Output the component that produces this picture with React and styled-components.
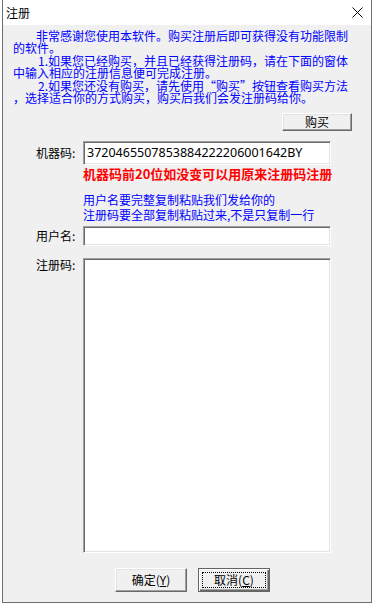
import React from 'react';
import styled, { createGlobalStyle } from 'styled-components';

const Global = createGlobalStyle`
  html, body { margin: 0; padding: 0; background: #ffffff; }
  body {
    width: 375px;
    height: 606px;
    overflow: hidden;
    font-family: "Noto Sans CJK SC", "Noto Sans", sans-serif;
  }
`;

const Window = styled.div`
  width: 370px;
  height: 603px;
  margin-left: 2px;
  box-sizing: border-box;
  border: 1px solid #6f6f6f;
  border-top: none;
  display: flex;
  flex-direction: column;
  background: #f0f0f0;
`;

const TitleBar = styled.div`
  height: 25px;
  flex: none;
  background: #ffffff;
  display: flex;
  align-items: center;
  justify-content: space-between;
  padding: 0 8px 0 3px;
`;

const Title = styled.span`
  font-size: 12px;
  line-height: 14px;
  color: #000;
  padding-top: 1px;
`;

const Client = styled.div`
  flex: 1;
  display: flex;
  flex-direction: column;
  padding: 5px 0 0 10px;
`;

const Intro = styled.div`
  color: #0000ff;
  font-size: 12px;
  line-height: 12px;
  display: flex;
  flex-direction: column;
  gap: 1px;
`;

const Para = styled.div`
  display: flex;
  flex-direction: column;
`;

const Line = styled.div`
  white-space: pre;
  height: 12px;
  padding-left: ${p => p.$indent || 0}px;
`;

const BuyRow = styled.div`
  display: flex;
  justify-content: flex-end;
  padding-right: 19px;
  margin-top: 9px;
`;

const Button = styled.div`
  width: ${p => p.$w || 72}px;
  height: ${p => p.$h || 24}px;
  box-sizing: border-box;
  background: #f0f0f0;
  border: 1px solid;
  border-color: ${p => (p.$default ? '#646464' : '#ffffff #696969 #696969 #ffffff')};
  box-shadow: ${p =>
    p.$default
      ? 'inset 1px 1px 0 #ffffff, inset -1px -1px 0 #696969, inset -2px -2px 0 #a0a0a0'
      : 'inset -1px -1px 0 #a0a0a0, inset 1px 1px 0 #e3e3e3'};
  display: flex;
  align-items: center;
  justify-content: center;
  font-size: 12px;
  line-height: 14px;
  color: #000;
  padding: ${p => (p.$default ? '3px' : '0')};
`;

const FocusRing = styled.span`
  flex: 1;
  align-self: stretch;
  border: 1px dotted #000;
  display: flex;
  align-items: center;
  justify-content: center;
`;

const Form = styled.div`
  display: grid;
  grid-template-columns: 47px 248px;
  margin-left: 23px;
  margin-top: 10px;
  align-items: center;
`;

const Label = styled.div`
  font-size: 12px;
  line-height: 14px;
  color: #000;
  align-self: ${p => (p.$top ? 'start' : 'center')};
  margin-top: ${p => p.$mt || 0}px;
`;

const Field = styled.div`
  box-sizing: border-box;
  height: ${p => p.$h}px;
  margin-top: ${p => p.$mt || 0}px;
  background: #ffffff;
  border: 1px solid;
  border-color: #a0a0a0 #ffffff #ffffff #a0a0a0;
  box-shadow: inset 1px 1px 0 #696969, inset -1px -1px 0 #e3e3e3;
  font-family: "Noto Sans", sans-serif;
  font-size: 12.5px;
  color: #000;
  padding: 3px 0 0 3px;
  line-height: 16px;
`;

const Warning = styled.div`
  grid-column: 2;
  margin-top: 2px;
  color: #ff0000;
  font-weight: bold;
  font-size: 13px;
  line-height: 14px;
  white-space: nowrap;
`;

const Hint = styled.div`
  grid-column: 2;
  margin-top: 11px;
  color: #0000ff;
  font-size: 12px;
  line-height: 15px;
  white-space: pre;
`;

const ButtonRow = styled.div`
  display: flex;
  gap: 11px;
  padding-left: 102px;
  margin-top: 15px;
`;

const Close = () => (
  <svg width="11" height="11" viewBox="0 0 11 11">
    <path d="M0.5 0.5 L10.5 10.5 M10.5 0.5 L0.5 10.5" stroke="#000" strokeWidth="1" fill="none" />
  </svg>
);

export default function App() {
  return (
    <>
      <Global />
      <Window>
        <TitleBar>
          <Title>注册</Title>
          <Close />
        </TitleBar>
        <Client>
          <Intro>
            <Para>
              <Line $indent={23}>非常感谢您使用本软件。购买注册后即可获得没有功能限制</Line>
              <Line>的软件。</Line>
            </Para>
            <Para>
              <Line $indent={25}>1.如果您已经购买，并且已经获得注册码，请在下面的窗体</Line>
              <Line>中输入相应的注册信息便可完成注册。</Line>
            </Para>
            <Para>
              <Line $indent={25}>2.如果您还没有购买，请先使用“购买”按钮查看购买方法</Line>
              <Line>，选择适合你的方式购买，购买后我们会发注册码给你。</Line>
            </Para>
          </Intro>
          <BuyRow>
            <Button $w={70} $h={18}>购买</Button>
          </BuyRow>
          <Form>
            <Label>机器码:</Label>
            <Field $h={24}>3720465507853884222206001642BY</Field>
            <Warning>机器码前20位如没变可以用原来注册码注册</Warning>
            <Hint>{'用户名要完整复制粘贴我们发给你的\n注册码要全部复制粘贴过来,不是只复制一行'}</Hint>
            <Label $mt={4}>用户名:</Label>
            <Field $h={20} $mt={4} />
            <Label $top $mt={12}>注册码:</Label>
            <Field $h={295} $mt={12} />
          </Form>
          <ButtonRow>
            <Button>
              确定(<u>Y</u>)
            </Button>
            <Button $default>
              <FocusRing>
                取消(<u>C</u>)
              </FocusRing>
            </Button>
          </ButtonRow>
        </Client>
      </Window>
    </>
  );
}
